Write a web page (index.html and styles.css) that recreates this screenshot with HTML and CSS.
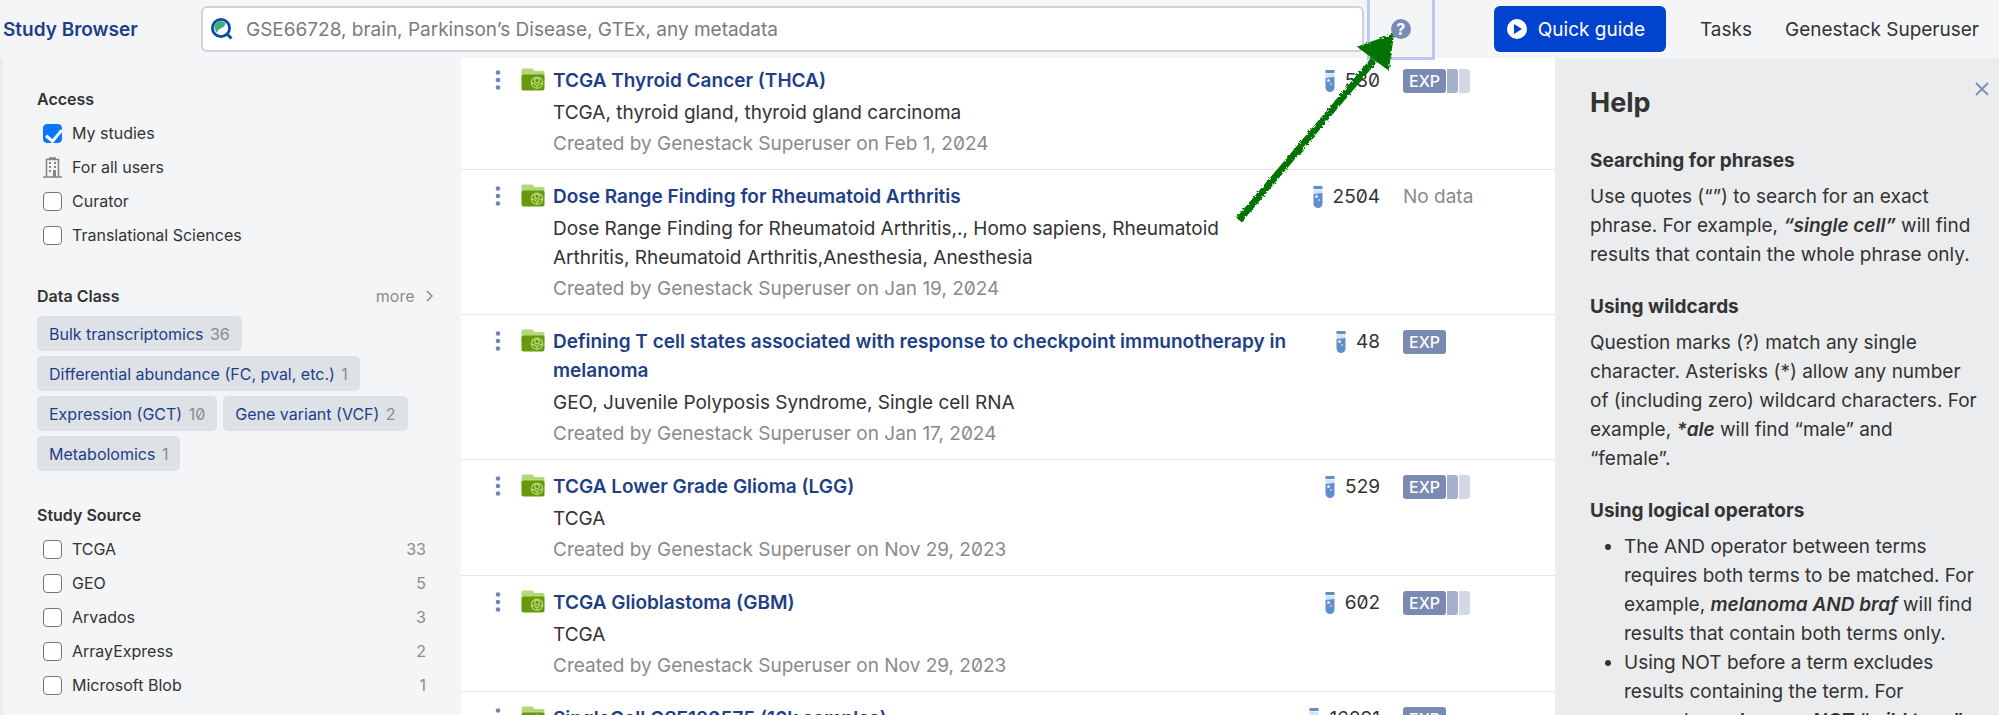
FILE: index.html
```html
<!DOCTYPE html>
<html lang="en">
<head>
<meta charset="utf-8">
<title>Study Browser</title>
<link rel="stylesheet" href="styles.css">
</head>
<body>
<svg class="defs" aria-hidden="true">
  <symbol id="folder" viewBox="0 0 24 23">
    <path fill="#b5d77c" d="M.5 2Q.5.5 2 .5h8.500q1.500 0 2 1l.7 1.500H22q1.500 0 1.500 1.500V12H.5z"/>
    <path fill="#66990b" d="M.5 9q0-2.500 2.500-2.500h18.500q2 0 2 2V20.500q0 2-2 2H2.500q-2 0-2-2z"/>
    <g fill="none" stroke="#b9d878" stroke-width="1.300">
      <circle cx="16" cy="14.700" r="5.600"/>
      <circle cx="16" cy="12.500" r="2.300"/>
      <path d="M10.500 15.500q3-.8 5 2.200M21.500 15.500q-3-.8-5 2.200M16 17v3"/>
    </g>
  </symbol>
  <symbol id="tube" viewBox="0 0 10 22">
    <path fill="#5e8fcc" d="M.5 0h9v3h-9z"/>
    <path fill="#d5e2f2" d="M.5 3.500h9V8h-9z"/>
    <path fill="#5e8fcc" d="M.5 8l9-1v10.500a4.500 4.500 0 0 1-9 0z"/>
    <circle cx="3.500" cy="10.500" r="1.500" fill="#dfe9f6"/><circle cx="6" cy="14" r="1" fill="#c3d5ec"/>
  </symbol>
  <symbol id="dots" viewBox="0 0 6 20">
    <g fill="#6f86b4"><circle cx="3" cy="2.500" r="2.300"/><circle cx="3" cy="10" r="2.300"/><circle cx="3" cy="17.500" r="2.300"/></g>
  </symbol>
</svg>

<header class="topbar">
  <a class="brand" href="#">Study Browser</a>
  <div class="search">
    <svg class="search-icon" viewBox="0 0 22 22" aria-hidden="true">
      <circle cx="10" cy="10" r="8.600" fill="#fff" stroke="#0a4aa3" stroke-width="2.800"/>
      <path d="M16 16l4.500 4.500" stroke="#0a4aa3" stroke-width="3"/>
      <path d="M4.800 13A6 6 0 0 1 14.500 5.300Q14 9 9.500 10.500 6.500 12 6 14.800z" fill="#3fae78"/>
    </svg>
    <input type="text" aria-label="Search studies" placeholder="GSE66728, brain, Parkinson’s Disease, GTEx, any metadata">
  </div>
  <button class="help-button" type="button" aria-label="Help"><span>?</span></button>
  <button class="guide" type="button">
    <svg viewBox="0 0 20 20" aria-hidden="true"><circle cx="10" cy="10" r="10" fill="#fff"/><path d="M7 5l8 5-8 5z" fill="#0143cf"/></svg>
    Quick guide
  </button>
  <nav class="links"><a href="#">Tasks</a><a href="#">Genestack Superuser</a></nav>
</header>

<div class="columns">
  <aside class="filters">
    <section class="group">
      <h2>Access</h2>
      <label class="option"><input type="checkbox" checked><span>My studies</span></label>
      <div class="option">
        <svg viewBox="0 0 19 21" aria-hidden="true"><g fill="none" stroke="#858585" stroke-width="1.500"><path d="M0 20h19M3.500 20V2.500h12V20M6 1h7"/></g><path fill="#858585" d="M6 5h2v2H6zM11 5h2v2h-2zM6 9h2v2H6zM11 9h2v2h-2zM6 13h2v2H6zM10 13h3v7h-3z"/></svg>
        <span>For all users</span>
      </div>
      <label class="option"><input type="checkbox"><span>Curator</span></label>
      <label class="option"><input type="checkbox"><span>Translational Sciences</span></label>
    </section>
    <section class="group">
      <div class="group-head"><h2>Data Class</h2><a class="more" href="#">more <svg viewBox="0 0 7 12" aria-hidden="true"><path d="M1 1l5 5-5 5" fill="none" stroke="#8c8c8c" stroke-width="1.500"/></svg></a></div>
      <div class="tags">
        <button type="button">Bulk transcriptomics <span>36</span></button>
        <button type="button">Differential abundance (FC, pval, etc.) <span>1</span></button>
        <button type="button">Expression (GCT) <span>10</span></button>
        <button type="button">Gene variant (VCF) <span>2</span></button>
        <button type="button">Metabolomics <span>1</span></button>
      </div>
    </section>
    <section class="group">
      <h2>Study Source</h2>
      <label class="option"><input type="checkbox"><span>TCGA</span><b>33</b></label>
      <label class="option"><input type="checkbox"><span>GEO</span><b>5</b></label>
      <label class="option"><input type="checkbox"><span>Arvados</span><b>3</b></label>
      <label class="option"><input type="checkbox"><span>ArrayExpress</span><b>2</b></label>
      <label class="option"><input type="checkbox"><span>Microsoft Blob</span><b>1</b></label>
    </section>
  </aside>

  <main class="studies">
    <article class="study">
      <svg class="dots" aria-hidden="true"><use href="#dots"/></svg><svg class="folder" aria-hidden="true"><use href="#folder"/></svg>
      <div class="info"><a href="#">TCGA Thyroid Cancer (THCA)</a><p>TCGA, thyroid gland, thyroid gland carcinoma</p><p class="by">Created by Genestack Superuser on Feb 1, 2024</p></div>
      <div class="count"><svg aria-hidden="true"><use href="#tube"/></svg>580</div>
      <div class="data"><span class="exp">EXP</span><i class="mid"></i><i class="light"></i></div>
    </article>
    <article class="study">
      <svg class="dots" aria-hidden="true"><use href="#dots"/></svg><svg class="folder" aria-hidden="true"><use href="#folder"/></svg>
      <div class="info"><a href="#">Dose Range Finding for Rheumatoid Arthritis</a><p>Dose Range Finding for Rheumatoid Arthritis,., Homo sapiens, Rheumatoid Arthritis, Rheumatoid Arthritis,Anesthesia, Anesthesia</p><p class="by">Created by Genestack Superuser on Jan 19, 2024</p></div>
      <div class="count"><svg aria-hidden="true"><use href="#tube"/></svg>2504</div>
      <div class="data">No data</div>
    </article>
    <article class="study">
      <svg class="dots" aria-hidden="true"><use href="#dots"/></svg><svg class="folder" aria-hidden="true"><use href="#folder"/></svg>
      <div class="info"><a href="#">Defining T cell states associated with response to checkpoint immunotherapy in melanoma</a><p>GEO, Juvenile Polyposis Syndrome, Single cell RNA</p><p class="by">Created by Genestack Superuser on Jan 17, 2024</p></div>
      <div class="count"><svg aria-hidden="true"><use href="#tube"/></svg>48</div>
      <div class="data"><span class="exp">EXP</span></div>
    </article>
    <article class="study">
      <svg class="dots" aria-hidden="true"><use href="#dots"/></svg><svg class="folder" aria-hidden="true"><use href="#folder"/></svg>
      <div class="info"><a href="#">TCGA Lower Grade Glioma (LGG)</a><p>TCGA</p><p class="by">Created by Genestack Superuser on Nov 29, 2023</p></div>
      <div class="count"><svg aria-hidden="true"><use href="#tube"/></svg>529</div>
      <div class="data"><span class="exp">EXP</span><i class="mid"></i><i class="light"></i></div>
    </article>
    <article class="study">
      <svg class="dots" aria-hidden="true"><use href="#dots"/></svg><svg class="folder" aria-hidden="true"><use href="#folder"/></svg>
      <div class="info"><a href="#">TCGA Glioblastoma (GBM)</a><p>TCGA</p><p class="by">Created by Genestack Superuser on Nov 29, 2023</p></div>
      <div class="count"><svg aria-hidden="true"><use href="#tube"/></svg>602</div>
      <div class="data"><span class="exp">EXP</span><i class="mid"></i><i class="light"></i></div>
    </article>
    <article class="study">
      <svg class="dots" aria-hidden="true"><use href="#dots"/></svg><svg class="folder" aria-hidden="true"><use href="#folder"/></svg>
      <div class="info"><a href="#">SingleCell GSE120575 (16k samples)</a></div>
      <div class="count"><svg aria-hidden="true"><use href="#tube"/></svg>16291</div>
      <div class="data"><span class="exp">EXP</span></div>
    </article>
  </main>

  <aside class="help">
    <button class="close" type="button" aria-label="Close help"><svg viewBox="0 0 14 14" aria-hidden="true"><path d="M1 1l12 12M13 1L1 13" stroke="#7b90bd" stroke-width="1.800"/></svg></button>
    <h1>Help</h1>
    <h3>Searching for phrases</h3>
    <p>Use quotes (“”) to search for an exact phrase. For example, <em>“single cell”</em> will find results that contain the whole phrase only.</p>
    <h3>Using wildcards</h3>
    <p>Question marks (?) match any single character. Asterisks (*) allow any number of (including zero) wildcard characters. For example, <em>*ale</em> will find “male” and<br>“female”.</p>
    <h3>Using logical operators</h3>
    <ul>
      <li>The AND operator between terms requires both terms to be matched. For example, <em>melanoma AND braf</em> will find results that contain both terms only.</li>
      <li>Using NOT before a term excludes results containing the term. For example, <em>melanoma NOT “wild type”</em></li>
    </ul>
  </aside>
</div>

<svg class="arrow" viewBox="0 0 170 200" aria-hidden="true">
  <filter id="rough"><feTurbulence type="fractalNoise" baseFrequency="0.4" numOctaves="2" seed="4"/><feDisplacementMap in="SourceGraphic" scale="4"/></filter>
  <g filter="url(#rough)"><path d="M9 189L144 29" stroke="#067306" stroke-width="7"/><path d="M163 4L129 16 158 38z" fill="#067306" stroke="#067306" stroke-width="2"/></g>
</svg>
</body>
</html>
```

FILE: styles.css
```css
* { box-sizing: border-box; }

body {
  margin: 0;
  height: 100vh;
  overflow: hidden;
  display: flex;
  flex-direction: column;
  background: #f3f5f7;
  color: #333;
  font: 19px/29px Inter, Roboto, sans-serif;
  font-variant-numeric: slashed-zero;
}

h1, h2, h3, p, ul { margin: 0; }
a { color: inherit; text-decoration: none; }
button, input { font: inherit; color: inherit; }
.defs { position: absolute; width: 0; height: 0; }

.topbar {
  flex: none;
  display: flex;
  align-items: center;
  height: 58px;
  padding-right: 20px;
}
.brand {
  width: 201px;
  padding-left: 3px;
  color: #1e3f87;
  font-weight: 600;
}
.search {
  flex: 1;
  display: flex;
  align-items: center;
  height: 46px;
  padding: 0 8px;
  gap: 13px;
  background: #fff;
  border: 2px solid #cfd2db;
  border-radius: 6px;
}
.search-icon { width: 22px; height: 22px; }
.search input {
  flex: 1;
  border: 0;
  padding: 0;
  outline: 0;
  background: none;
}
.search input::placeholder { color: #7b7b7b; opacity: 1; }
.help-button {
  align-self: flex-start;
  display: flex;
  align-items: center;
  justify-content: center;
  z-index: 1;
  width: 68px;
  height: 60px;
  margin: 0 59px 0 3px;
  padding: 0;
  background: none;
  border: 3px solid #bccaf0;
  border-top: 0;
}
.help-button span {
  width: 20px;
  height: 20px;
  border-radius: 50%;
  background: #7a8bb5;
  color: #fff;
  font-size: 16px;
  font-weight: 700;
  line-height: 20px;
}
.guide {
  display: flex;
  align-items: center;
  gap: 11px;
  height: 46px;
  padding: 0 21px 0 13px;
  border: 0;
  border-radius: 6px;
  background: #0143cf;
  color: #fff;
}
.guide svg { width: 20px; height: 20px; }
.links { display: flex; gap: 33px; margin-left: 34px; }

.columns { flex: 1; min-height: 0; display: flex; }

.filters {
  flex: none;
  width: 461px;
  padding: 29px 24px 0 34px;
  border-left: 3px solid #eaecee;
  font-size: 16px;
  line-height: 24px;
  overflow: hidden;
}
.group { margin-bottom: 32px; }
.group h2 { font-size: 16px; line-height: 24px; font-weight: 600; margin-bottom: 5px; }
.group-head { display: flex; justify-content: space-between; }
.more { color: #8c8c8c; padding-right: 4px; }
.more svg { width: 7px; height: 12px; margin-left: 7px; }
.option { display: flex; align-items: center; gap: 10px; height: 34px; padding: 0 11px 0 6px; }
.option input {
  appearance: none;
  position: relative;
  width: 19px;
  height: 19px;
  margin: 0;
  border: 1px solid #767676;
  border-radius: 4px;
  background: #fff;
}
.option input:checked {
  border-color: #0a75ff;
  background: #0a75ff;
}
.option input:checked::after {
  content: "";
  position: absolute;
  left: 5px;
  top: 1px;
  width: 7px;
  height: 13px;
  border: solid #fff;
  border-width: 0 3px 3px 0;
  transform: rotate(40deg);
}
.option svg { width: 19px; height: 21px; }
.option b { margin-left: auto; color: #8c8c8c; font-weight: 400; }
.tags { display: flex; flex-wrap: wrap; gap: 5px 6px; padding-top: 3px; }
.tags button {
  height: 35px;
  padding: 0 12px;
  border: 0;
  border-radius: 5px;
  background: #dee1e6;
  color: #1e3f87;
}
.tags span { color: #8c8c8c; margin-left: 2px; }

.studies { flex: 1; min-width: 0; background: #fff; overflow: hidden; }
.study {
  display: flex;
  align-items: flex-start;
  padding: 12px 0 11px 34px;
  border-bottom: 1px solid #e4e7ea;
}
.study:first-child { padding-top: 8px; }
.dots { width: 6px; height: 20px; margin: 4px 20px 0 0; }
.folder { width: 24px; height: 23px; margin: 2px 8px 0 0; }
.info { flex: 1; min-width: 0; }
.info a { display: block; color: #1e3f87; font-weight: 600; margin-bottom: 3px; }
.info p { max-width: 690px; margin-bottom: 2px; }
.info .by { color: #8a8a8a; margin: 0; }
.count { width: 88px; display: flex; align-items: center; justify-content: flex-end; gap: 10px; }
.count svg { flex: none; width: 10px; height: 22px; }
.data { display: flex; align-items: center; gap: 1px; width: 152px; height: 29px; margin-left: 23px; color: #8a8a8a; }
.exp {
  padding: 0 6px;
  border-radius: 3px;
  background: #7a8ab3;
  color: #fff;
  font: 500 16px/24px Inter, Roboto, sans-serif;
}
.data i { height: 24px; width: 11px; border-radius: 0 3px 3px 0; }
.mid { background: #a5b0cd; }
.light { background: #d3d8e6; }

.help {
  position: relative;
  flex: none;
  width: 444px;
  padding: 27px 20px 0 35px;
  background: #eaecee;
  overflow: hidden;
}
.close { position: absolute; top: 17px; right: 3px; width: 28px; height: 28px; padding: 7px; border: 0; background: none; }
.close svg { display: block; width: 14px; height: 14px; }
.help h1 { font-size: 27px; line-height: 36px; font-weight: 700; }
.help h3 { font-size: 19px; line-height: 29px; font-weight: 700; margin: 23px 0 7px; }
.help h1 + h3 { margin-top: 25px; }
.help em { font-weight: 600; }
.help ul { padding-left: 34px; }

.arrow {
  position: absolute;
  left: 1230px;
  top: 31px;
  width: 170px;
  height: 200px;
  z-index: 2;
}
```
